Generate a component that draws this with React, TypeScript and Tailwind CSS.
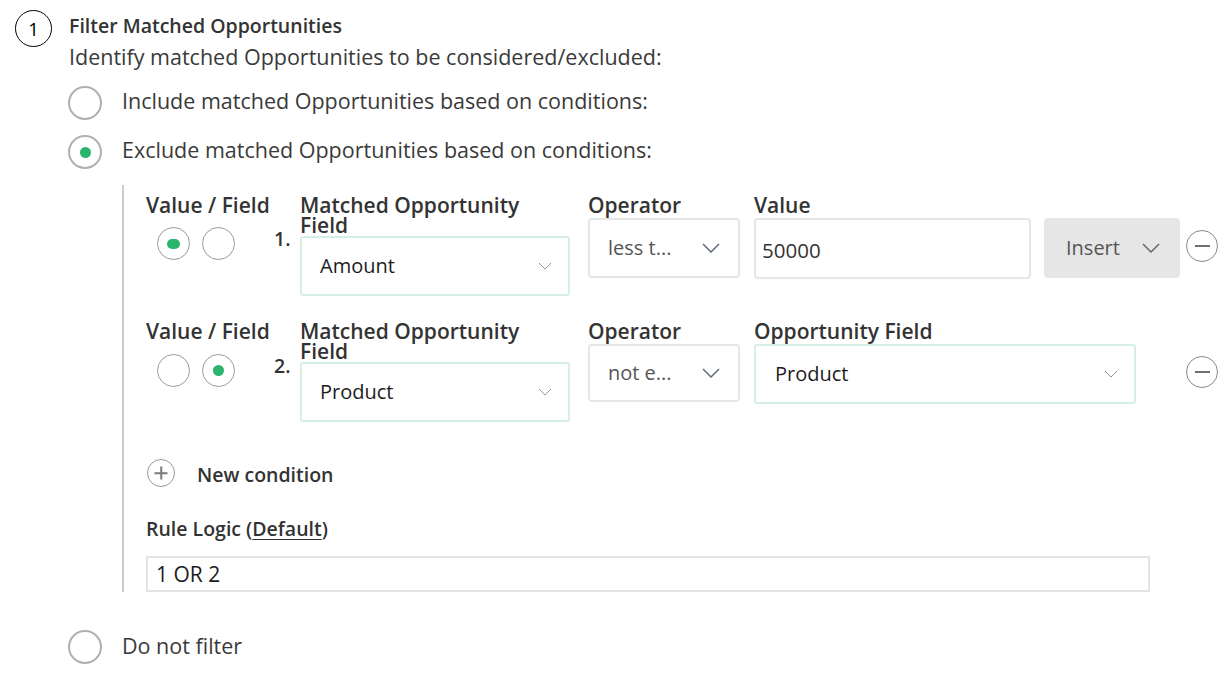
import React from 'react';

const Chevron = ({ dark = false }: { dark?: boolean }) =>
    dark ? (
        <svg width="18" height="10" viewBox="0 0 18 10" fill="none">
            <path d="M1 1l8 8 8-8" stroke="#5f6b78" strokeWidth="1.5" />
        </svg>
    ) : (
        <svg width="14" height="8" viewBox="0 0 14 8" fill="none">
            <path d="M1 1l6 6 6-6" stroke="#8a96a3" strokeWidth="1" />
        </svg>
    );

const Radio = ({ checked = false, size = 'lg', oval = false }: { checked?: boolean; size?: 'lg' | 'sm'; oval?: boolean }) => (
    <div
        className={
            size === 'lg'
                ? 'w-[34px] h-[34px] rounded-full border-2 border-[#b0b0b0] flex items-center justify-center shrink-0'
                : 'w-[33px] h-[33px] rounded-full border-[1.5px] border-[#9a9a9a] flex items-center justify-center shrink-0'
        }
    >
        {checked && (
            <div className={oval ? 'w-[13px] h-[10px] rounded-full bg-[#2bb46c]' : 'w-[11px] h-[11px] rounded-full bg-[#2bb46c]'} />
        )}
    </div>
);

const MinusCircle = () => (
    <div className="w-[32px] h-[32px] rounded-full border-[1.5px] border-[#8a8a8a] flex items-center justify-center shrink-0">
        <div className="w-[15px] h-[2px] bg-[#6f6f6f]" />
    </div>
);

const Label = ({ children }: { children: React.ReactNode }) => (
    <div className="text-[21px] font-semibold leading-[20px] text-[#333]">{children}</div>
);

const App = () => {
    return (
        <div className="w-[1232px] h-[690px] bg-white overflow-hidden font-['Open_Sans',sans-serif] text-[#3a3a3a]">
            <div className="flex pl-[15px] pt-[10px]">
                {/* step number */}
                <div className="w-[37px] h-[37px] rounded-full border-[1.5px] border-black flex items-center justify-center text-[18.5px] text-black shrink-0 mr-[17px]">
                    1
                </div>

                <div className="flex-1">
                    <div className="text-[19.5px] font-semibold leading-[26px] mt-[3px] text-[#333]">Filter Matched Opportunities</div>
                    <div className="text-[21.5px] leading-[28px] mt-[4px]">Identify matched Opportunities to be considered/excluded:</div>

                    <div className="flex items-center gap-[20px] mt-[15px] -ml-[1px]">
                        <Radio />
                        <span className="text-[21.5px] leading-[28px] mb-[4px]">Include matched Opportunities based on conditions:</span>
                    </div>
                    <div className="flex items-center gap-[20px] mt-[15px] -ml-[1px]">
                        <Radio checked />
                        <span className="text-[21.5px] leading-[28px] mb-[4px]">Exclude matched Opportunities based on conditions:</span>
                    </div>

                    {/* Conditions block */}
                    <div className="ml-[53px] mt-[16px] border-l-2 border-[#cccccc] pl-[22px] pt-[10px]">
                        {/* Condition 1 */}
                        <div className="flex items-start">
                            <div className="w-[128px] shrink-0">
                                <Label>Value / Field</Label>
                                <div className="flex gap-[12px] pl-[11px] mt-[12px]">
                                    <Radio size="sm" checked oval />
                                    <Radio size="sm" />
                                </div>
                            </div>
                            <div className="w-[26px] shrink-0 mt-[32px] text-[19.5px] font-semibold leading-[24px] text-[#333]">1.</div>
                            <div className="w-[270px] shrink-0">
                                <Label>Matched Opportunity Field</Label>
                                <div className="mt-[1px] h-[60px] border-2 border-[#d6efe2] rounded-[3px] flex items-center justify-between pl-[18px] pr-[16px]">
                                    <span className="text-[20px] text-[#1c1c1c]">Amount</span>
                                    <Chevron />
                                </div>
                            </div>
                            <div className="w-[152px] shrink-0 ml-[18px]">
                                <Label>Operator</Label>
                                <div className="mt-[3px] h-[60px] border-2 border-[#e6e6e6] rounded-[4px] flex items-center justify-between pl-[18px] pr-[18px]">
                                    <span className="text-[20px] text-[#555]">less t...</span>
                                    <Chevron dark />
                                </div>
                            </div>
                            <div className="w-[277px] shrink-0 ml-[14px]">
                                <Label>Value</Label>
                                <div className="mt-[3px] h-[61px] border-2 border-[#e6e6e6] rounded-[4px] flex items-center pl-[6px] pt-[3px]">
                                    <span className="text-[20.5px] text-[#333]">50000</span>
                                </div>
                            </div>
                            <div className="w-[136px] h-[60px] shrink-0 ml-[13px] mt-[23px] bg-[#e6e6e6] rounded-[4px] flex items-center justify-between pl-[22px] pr-[20px]">
                                <span className="text-[20px] text-[#555]">Insert</span>
                                <Chevron dark />
                            </div>
                            <div className="ml-[6px] mt-[35px]">
                                <MinusCircle />
                            </div>
                        </div>

                        {/* Condition 2 */}
                        <div className="flex items-start mt-[25px]">
                            <div className="w-[128px] shrink-0">
                                <Label>Value / Field</Label>
                                <div className="flex gap-[12px] pl-[11px] mt-[13px]">
                                    <Radio size="sm" />
                                    <Radio size="sm" checked />
                                </div>
                            </div>
                            <div className="w-[26px] shrink-0 mt-[33px] text-[19.5px] font-semibold leading-[24px] text-[#333]">2.</div>
                            <div className="w-[270px] shrink-0">
                                <Label>Matched Opportunity Field</Label>
                                <div className="mt-[1px] h-[60px] border-2 border-[#d6efe2] rounded-[3px] flex items-center justify-between pl-[18px] pr-[16px]">
                                    <span className="text-[20px] text-[#1c1c1c]">Product</span>
                                    <Chevron />
                                </div>
                            </div>
                            <div className="w-[152px] shrink-0 ml-[18px]">
                                <Label>Operator</Label>
                                <div className="mt-[3px] h-[58px] border-2 border-[#e6e6e6] rounded-[4px] flex items-center justify-between pl-[18px] pr-[18px]">
                                    <span className="text-[20px] text-[#555]">not e...</span>
                                    <Chevron dark />
                                </div>
                            </div>
                            <div className="w-[382px] shrink-0 ml-[14px]">
                                <Label>Opportunity Field</Label>
                                <div className="mt-[3px] h-[60px] border-2 border-[#d6efe2] rounded-[3px] flex items-center justify-between pl-[19px] pr-[16px]">
                                    <span className="text-[20px] text-[#1c1c1c]">Product</span>
                                    <Chevron />
                                </div>
                            </div>
                            <div className="ml-[50px] mt-[35px]">
                                <MinusCircle />
                            </div>
                        </div>

                        {/* New condition */}
                        <div className="flex items-center mt-[37px] ml-[1px]">
                            <div className="w-[28px] h-[28px] rounded-full border-[1.5px] border-[#9a9a9a] relative shrink-0">
                                <div className="absolute left-1/2 top-1/2 w-[13px] h-[1.5px] -translate-x-1/2 -translate-y-1/2 bg-[#7a7a7a]" />
                                <div className="absolute left-1/2 top-1/2 w-[1.5px] h-[13px] -translate-x-1/2 -translate-y-1/2 bg-[#7a7a7a]" />
                            </div>
                            <span className="ml-[22px] mt-[3px] text-[19.5px] font-semibold leading-[24px] text-[#333]">New condition</span>
                        </div>

                        <div className="mt-[30px] text-[19.5px] font-semibold leading-[24px] text-[#333]">
                            Rule Logic (<span className="underline underline-offset-[3px]">Default</span>)
                        </div>
                        <div className="mt-[15px] w-[1004px] h-[36px] border-2 border-[#e3e3e3] pl-[8px] text-[21px] leading-[32px] text-[#1c1c1c]">
                            1 OR 2
                        </div>
                    </div>

                    <div className="flex items-center gap-[20px] mt-[38px] -ml-[1px]">
                        <Radio />
                        <span className="text-[21.5px] leading-[28px] mb-[2px]">Do not filter</span>
                    </div>
                </div>
            </div>
        </div>
    );
};

export default App;
